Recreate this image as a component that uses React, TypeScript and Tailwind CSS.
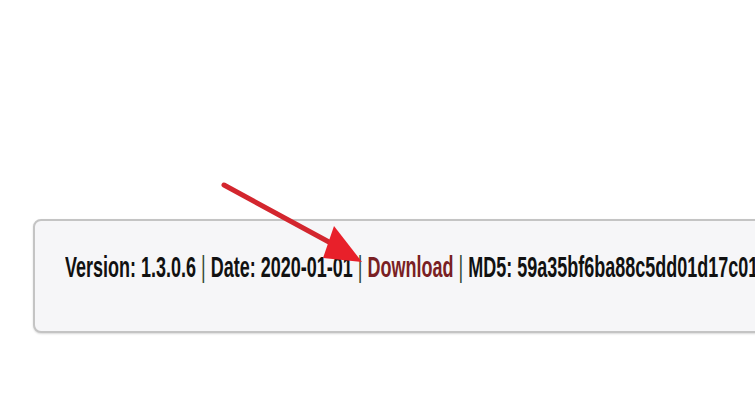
export default function App() {
  return (
    <div className="relative w-[755px] h-[400px] overflow-hidden bg-white">
      <div className="pt-[219px] pl-[33px]">
        <div className="w-[760px] h-[114px] flex items-center pl-[30px] pb-[18px] rounded-[8px] border-2 border-[#c4c4c4] bg-[#f6f6f8] shadow-[0_1px_2px_rgba(0,0,0,0.15)]">
          <div
            className="origin-left scale-x-[0.6] whitespace-nowrap text-[30px] font-bold leading-none text-[#111111]"
            style={{ fontFamily: '"Liberation Sans", Arial, sans-serif' }}
          >
            <span>Version: 1.3.0.6 </span>
            <span className="font-normal text-[#2f4a33]">|</span>
            <span> Date: 2020-01-01 </span>
            <span className="font-normal text-[#2f4a33]">|</span>
            <span className="text-[#7a1f24]"> Download </span>
            <span className="font-normal text-[#2f4a33]">|</span>
            <span> MD5: 59a35bf6ba88c5dd01d17c01a8f3</span>
          </div>
        </div>
      </div>
      <svg className="absolute left-0 top-0" width="755" height="400" viewBox="0 0 755 400">
        <line x1="224" y1="185" x2="340" y2="248" stroke="#d3262e" strokeWidth="5" strokeLinecap="round" />
        <polygon points="334,226 362,262 323,258" fill="#e8202a" />
      </svg>
    </div>
  );
}
